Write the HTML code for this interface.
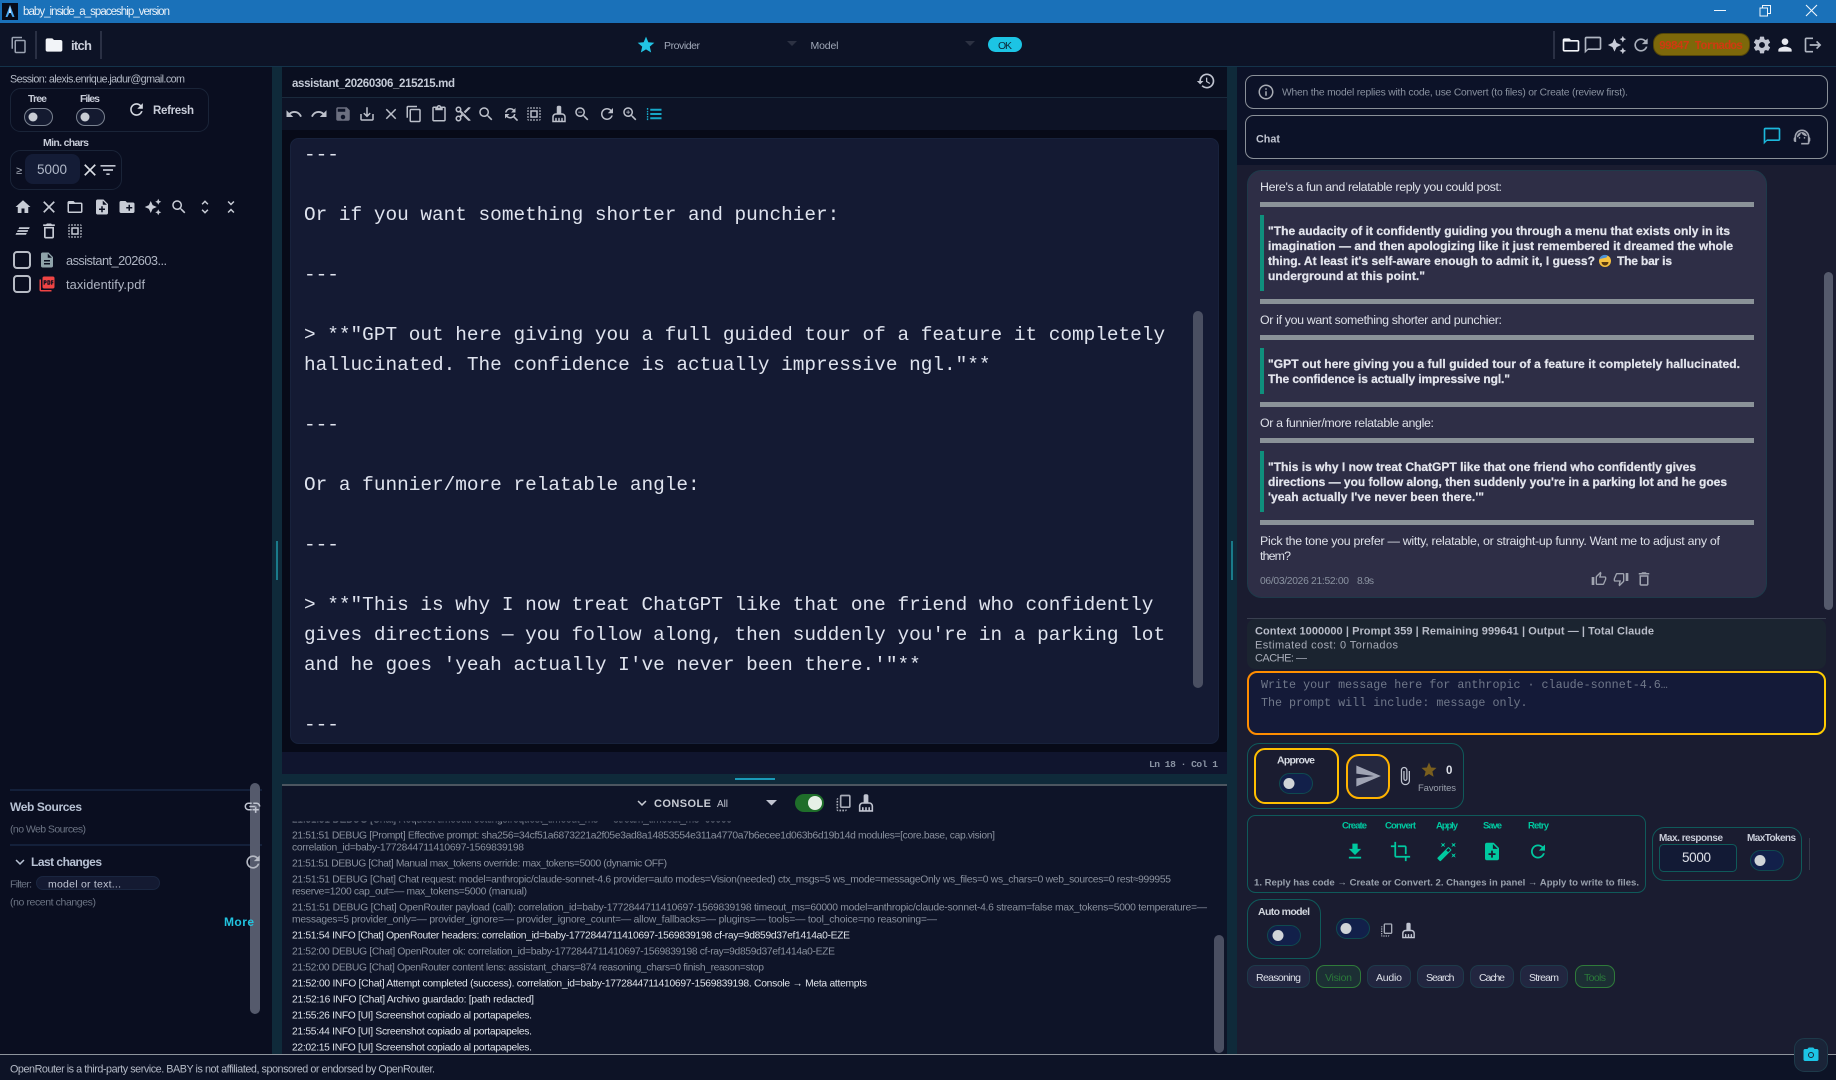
<!DOCTYPE html>
<html lang="en"><head><meta charset="utf-8"><title>baby_inside_a_spaceship_version</title>
<style>
html,body{margin:0;padding:0;background:#0a0e20;width:1836px;height:1080px;overflow:hidden}
svg{display:block}
text{font-family:"Liberation Sans","DejaVu Sans",sans-serif;white-space:pre}
.m{font-family:"Liberation Mono",monospace}
.b{font-weight:bold}
.log text{font-size:10.3px}
.d{fill:#8a919e}.i{fill:#dfe3ea}
.ed text{font-family:"Liberation Mono",monospace;font-size:19.4px;fill:#dfe3ee}
.bq text{font-weight:bold;font-size:12px;fill:#e2e4ec;stroke:#e2e4ec;stroke-width:.25px}
.p{font-size:12.4px;fill:#dde0e8}
.chip{fill:#222640;stroke:#1e3a4a}
.chipg{fill:#1c2f34;stroke:#2f7a3a}
.teal{fill:none;stroke:#0f5a5a}
</style></head><body>
<svg xmlns="http://www.w3.org/2000/svg" width="1836" height="1080" viewBox="0 0 1836 1080">
<defs>
<linearGradient id="og" x1="0" x2="1" y1="0" y2="0"><stop offset="0" stop-color="#ff8c00"/><stop offset=".45" stop-color="#ffa000"/><stop offset="1" stop-color="#ffcc00"/></linearGradient>
<clipPath id="logclip"><rect x="282" y="822" width="930" height="232"/></clipPath>
<symbol id="home" viewBox="0 0 24 24"><path d="M10 20v-6h4v6h5v-8h3L12 3 2 12h3v8z"/></symbol>
<symbol id="close" viewBox="0 0 24 24"><path d="M19 6.41L17.59 5 12 10.59 6.41 5 5 6.41 10.59 12 5 17.59 6.41 19 12 13.41 17.59 19 19 17.59 13.41 12z"/></symbol>
<symbol id="folderO" viewBox="0 0 24 24"><path d="M20 6h-8l-2-2H4c-1.1 0-2 .9-2 2v12c0 1.1.9 2 2 2h16c1.1 0 2-.9 2-2V8c0-1.1-.9-2-2-2zm0 12H4V8h16v10z"/></symbol>
<symbol id="folder" viewBox="0 0 24 24"><path d="M10 4H4c-1.1 0-2 .9-2 2v12c0 1.1.9 2 2 2h16c1.1 0 2-.9 2-2V8c0-1.1-.9-2-2-2h-8l-2-2z"/></symbol>
<symbol id="noteadd" viewBox="0 0 24 24"><path d="M14 2H6c-1.1 0-1.99.9-1.99 2L4 20c0 1.1.89 2 1.99 2H18c1.1 0 2-.9 2-2V8l-6-6zm2 14h-3v3h-2v-3H8v-2h3v-3h2v3h3v2zm-3-7V3.5L18.5 9H13z"/></symbol>
<symbol id="newfolder" viewBox="0 0 24 24"><path d="M20 6h-8l-2-2H4c-1.11 0-1.99.89-1.99 2L2 18c0 1.11.89 2 2 2h16c1.11 0 2-.89 2-2V8c0-1.11-.89-2-2-2zm-1 8h-3v3h-2v-3h-3v-2h3V9h2v3h3v2z"/></symbol>
<symbol id="spark" viewBox="0 0 24 24"><path d="M19 9l1.25-2.75L23 5l-2.75-1.25L19 1l-1.25 2.75L15 5l2.75 1.25L19 9zm-7.5.5L9 4 6.5 9.5 1 12l5.5 2.5L9 20l2.5-5.5L17 12l-5.5-2.5zM19 15l-1.25 2.75L15 19l2.75 1.25L19 23l1.25-2.75L23 19l-2.75-1.25L19 15z"/></symbol>
<symbol id="search" viewBox="0 0 24 24"><path d="M15.5 14h-.79l-.28-.27C15.41 12.59 16 11.11 16 9.5 16 5.91 13.09 3 9.5 3S3 5.91 3 9.5 5.91 16 9.5 16c1.61 0 3.09-.59 4.23-1.57l.27.28v.79l5 4.99L20.49 19l-4.99-5zm-6 0C7.01 14 5 11.99 5 9.5S7.01 5 9.5 5 14 7.01 14 9.5 11.99 14 9.5 14z"/></symbol>
<symbol id="zoomout" viewBox="0 0 24 24"><path d="M15.5 14h-.79l-.28-.27C15.41 12.59 16 11.11 16 9.5 16 5.91 13.09 3 9.5 3S3 5.91 3 9.5 5.91 16 9.5 16c1.61 0 3.09-.59 4.23-1.57l.27.28v.79l5 4.99L20.49 19l-4.99-5zm-6 0C7.01 14 5 11.99 5 9.5S7.01 5 9.5 5 14 7.01 14 9.5 11.99 14 9.5 14zM7 9h5v1H7z"/></symbol>
<symbol id="zoomin" viewBox="0 0 24 24"><path d="M15.5 14h-.79l-.28-.27C15.41 12.59 16 11.11 16 9.5 16 5.91 13.09 3 9.5 3S3 5.91 3 9.5 5.91 16 9.5 16c1.61 0 3.09-.59 4.23-1.57l.27.28v.79l5 4.99L20.49 19l-4.99-5zm-6 0C7.01 14 5 11.99 5 9.5S7.01 5 9.5 5 14 7.01 14 9.5 11.99 14 9.5 14zM12 10h-2v2H9v-2H7V9h2V7h1v2h2v1z"/></symbol>
<symbol id="more" viewBox="0 0 24 24"><path d="M12 5.83L15.17 9l1.41-1.41L12 3 7.41 7.59 8.83 9 12 5.83zm0 12.34L8.83 15l-1.41 1.41L12 21l4.59-4.59L15.17 15 12 18.17z"/></symbol>
<symbol id="less" viewBox="0 0 24 24"><path d="M7.41 18.59L8.83 20 12 16.83 15.17 20l1.41-1.41L12 14l-4.59 4.59zm9.18-13.18L15.17 4 12 7.17 8.83 4 7.41 5.41 12 10l4.59-4.59z"/></symbol>
<symbol id="lines" viewBox="0 0 24 24"><path d="M7 7h14l-1 2.4H6zM5 10.8h14l-1 2.4H4zM3 14.6h14l-1 2.4H2z"/></symbol>
<symbol id="trash" viewBox="0 0 24 24"><path d="M6 19c0 1.1.9 2 2 2h8c1.1 0 2-.9 2-2V7H6v12zM8 9h8v10H8V9zm7.5-5l-1-1h-5l-1 1H5v2h14V4z"/></symbol>
<symbol id="selall" viewBox="0 0 24 24"><path d="M3 5h2V3c-1.1 0-2 .9-2 2zm0 8h2v-2H3v2zm4 8h2v-2H7v2zM3 9h2V7H3v2zm10-6h-2v2h2V3zm6 0v2h2c0-1.1-.9-2-2-2zM5 21v-2H3c0 1.1.9 2 2 2zm-2-4h2v-2H3v2zM9 3H7v2h2V3zm2 18h2v-2h-2v2zm8-8h2v-2h-2v2zm0 8c1.1 0 2-.9 2-2h-2v2zm0-12h2V7h-2v2zm0 8h2v-2h-2v2zm-4 4h2v-2h-2v2zm0-16h2V3h-2v2zM7 17h10V7H7v10zm2-8h6v6H9V9z"/></symbol>
<symbol id="doc" viewBox="0 0 24 24"><path d="M14 2H6c-1.1 0-1.99.9-1.99 2L4 20c0 1.1.89 2 1.99 2H18c1.1 0 2-.9 2-2V8l-6-6zm2 16H8v-2h8v2zm0-4H8v-2h8v2zm-3-5V3.5L18.5 9H13z"/></symbol>
<symbol id="pdf" viewBox="0 0 24 24"><path d="M20 2H8c-1.1 0-2 .9-2 2v12c0 1.1.9 2 2 2h12c1.1 0 2-.9 2-2V4c0-1.1-.9-2-2-2zm-8.5 7.5c0 .83-.67 1.5-1.5 1.5H9v2H7.5V7H10c.83 0 1.5.67 1.5 1.5v1zm5 2c0 .83-.67 1.5-1.5 1.5h-2.5V7H15c.83 0 1.5.67 1.5 1.5v3zm4-3H19v1h1.5V11H19v2h-1.5V7h3v1.5zM9 9.5h1v-1H9v1zM4 6H2v14c0 1.1.9 2 2 2h14v-2H4V6zm10 5.5h1v-3h-1v3z"/></symbol>
<symbol id="refresh" viewBox="0 0 24 24"><path d="M17.65 6.35C16.2 4.9 14.21 4 12 4c-4.42 0-7.99 3.58-7.99 8s3.57 8 7.99 8c3.73 0 6.84-2.55 7.73-6h-2.08c-.82 2.33-3.04 4-5.65 4-3.31 0-6-2.69-6-6s2.69-6 6-6c1.66 0 3.14.69 4.22 1.78L13 11h7V4l-2.35 2.35z"/></symbol>
<symbol id="filter" viewBox="0 0 24 24"><path d="M10 18h4v-2h-4v2zM3 6v2h18V6H3zm3 7h12v-2H6v2z"/></symbol>
<symbol id="undo" viewBox="0 0 24 24"><path d="M12.5 8c-2.65 0-5.05.99-6.9 2.6L2 7v9h9l-3.62-3.62c1.39-1.16 3.16-1.88 5.12-1.88 3.54 0 6.55 2.31 7.6 5.5l2.37-.78C21.08 11.03 17.15 8 12.5 8z"/></symbol>
<symbol id="redo" viewBox="0 0 24 24"><path d="M18.4 10.6C16.55 8.99 14.15 8 11.5 8c-4.65 0-8.58 3.03-9.96 7.22L3.9 16c1.05-3.19 4.05-5.5 7.6-5.5 1.95 0 3.73.72 5.12 1.88L13 16h9V7l-3.6 3.6z"/></symbol>
<symbol id="save" viewBox="0 0 24 24"><path d="M17 3H5c-1.11 0-2 .9-2 2v14c0 1.1.89 2 2 2h14c1.1 0 2-.9 2-2V7l-4-4zm-5 16c-1.66 0-3-1.34-3-3s1.34-3 3-3 3 1.34 3 3-1.34 3-3 3zm3-10H5V5h10v4z"/></symbol>
<symbol id="savealt" viewBox="0 0 24 24"><path d="M19 12v7H5v-7H3v7c0 1.1.9 2 2 2h14c1.1 0 2-.9 2-2v-7h-2zm-6 .67l2.59-2.58L17 11.5l-5 5-5-5 1.41-1.41L11 12.67V3h2z"/></symbol>
<symbol id="copy" viewBox="0 0 24 24"><path d="M16 1H4c-1.1 0-2 .9-2 2v14h2V3h12V1zm3 4H8c-1.1 0-2 .9-2 2v14c0 1.1.9 2 2 2h11c1.1 0 2-.9 2-2V7c0-1.1-.9-2-2-2zm0 16H8V7h11v14z"/></symbol>
<symbol id="paste" viewBox="0 0 24 24"><path d="M19 2h-4.18C14.4.84 13.3 0 12 0c-1.3 0-2.4.84-2.82 2H5c-1.1 0-2 .9-2 2v16c0 1.1.9 2 2 2h14c1.1 0 2-.9 2-2V4c0-1.1-.9-2-2-2zm-7 0c.55 0 1 .45 1 1s-.45 1-1 1-1-.45-1-1 .45-1 1-1zm7 18H5V4h2v3h10V4h2v16z"/></symbol>
<symbol id="cut" viewBox="0 0 24 24"><path d="M9.64 7.64c.23-.5.36-1.05.36-1.64 0-2.21-1.79-4-4-4S2 3.79 2 6s1.79 4 4 4c.59 0 1.14-.13 1.64-.36L10 12l-2.36 2.36C7.14 14.13 6.59 14 6 14c-2.21 0-4 1.79-4 4s1.79 4 4 4 4-1.79 4-4c0-.59-.13-1.14-.36-1.64L12 14l7 7h3v-1L9.64 7.64zM6 8c-1.1 0-2-.89-2-2s.9-2 2-2 2 .89 2 2-.9 2-2 2zm0 12c-1.1 0-2-.89-2-2s.9-2 2-2 2 .89 2 2-.9 2-2 2zm6-7.5c-.28 0-.5-.22-.5-.5s.22-.5.5-.5.5.22.5.5-.22.5-.5.5zM19 3l-6 6 2 2 7-7V3z"/></symbol>
<symbol id="findrep" viewBox="0 0 24 24"><path d="M11 6c1.38 0 2.63.56 3.54 1.46L12 10h6V4l-2.05 2.05C14.68 4.78 12.93 4 11 4c-3.53 0-6.43 2.61-6.92 6H6.1c.46-2.28 2.48-4 4.9-4zm5.64 9.14c.66-.9 1.12-1.97 1.28-3.14H15.9c-.46 2.28-2.48 4-4.9 4-1.38 0-2.63-.56-3.54-1.46L10 12H4v6l2.05-2.05C7.32 17.22 9.07 18 11 18c1.55 0 2.98-.51 4.14-1.36L20 21.49 21.49 20l-4.85-4.86z"/></symbol>
<symbol id="brush" viewBox="0 0 24 24"><path d="M16 11h-1V3c0-1.1-.9-2-2-2h-2c-1.1 0-2 .9-2 2v8H8c-2.76 0-5 2.24-5 5v7h18v-7c0-2.76-2.24-5-5-5zm3 10h-2v-3c0-.55-.45-1-1-1s-1 .45-1 1v3h-2v-3c0-.55-.45-1-1-1s-1 .45-1 1v3H9v-3c0-.55-.45-1-1-1s-1 .45-1 1v3H5v-5c0-1.65 1.35-3 3-3h8c1.65 0 3 1.35 3 3v5z"/></symbol>
<symbol id="list" viewBox="0 0 24 24"><path d="M7 5h15v2.6H7zM7 10.7h15v2.6H7zM7 16.4h15v2.6H7zM2.5 4h1.8v2.4H2.5zM2.5 7.8h1.8v2H2.5zM2.5 11h1.8v2.4H2.5zM2.5 14.6h1.8v2H2.5zM2.5 17.8h1.8v2.4H2.5z"/></symbol>
<symbol id="history" viewBox="0 0 24 24"><path d="M13 3c-4.97 0-9 4.03-9 9H1l3.89 3.89.07.14L9 12H6c0-3.87 3.13-7 7-7s7 3.13 7 7-3.13 7-7 7c-1.93 0-3.68-.79-4.94-2.06l-1.42 1.42C8.27 19.99 10.51 21 13 21c4.97 0 9-4.03 9-9s-4.03-9-9-9zm-1 5v5l4.28 2.54.72-1.21-3.5-2.08V8H12z"/></symbol>
<symbol id="star" viewBox="0 0 24 24"><path d="M12 17.27L18.18 21l-1.64-7.03L22 9.24l-7.19-.61L12 2 9.19 8.63 2 9.24l5.46 4.73L5.82 21z"/></symbol>
<symbol id="chat" viewBox="0 0 24 24"><path d="M20 2H4c-1.1 0-2 .9-2 2v18l4-4h14c1.1 0 2-.9 2-2V4c0-1.1-.9-2-2-2zm0 14H6l-2 2V4h16v12z"/></symbol>
<symbol id="gear" viewBox="0 0 24 24"><path d="M19.43 12.98c.04-.32.07-.64.07-.98s-.03-.66-.07-.98l2.11-1.65c.19-.15.24-.42.12-.64l-2-3.46c-.12-.22-.39-.3-.61-.22l-2.49 1c-.52-.4-1.08-.73-1.69-.98l-.38-2.65C14.46 2.18 14.25 2 14 2h-4c-.25 0-.46.18-.49.42l-.38 2.65c-.61.25-1.17.59-1.69.98l-2.49-1c-.23-.09-.49 0-.61.22l-2 3.46c-.13.22-.07.49.12.64l2.11 1.65c-.04.32-.07.65-.07.98s.03.66.07.98l-2.11 1.65c-.19.15-.24.42-.12.64l2 3.46c.12.22.39.3.61.22l2.49-1c.52.4 1.08.73 1.69.98l.38 2.65c.03.24.24.42.49.42h4c.25 0 .46-.18.49-.42l.38-2.65c.61-.25 1.17-.59 1.69-.98l2.49 1c.23.09.49 0 .61-.22l2-3.46c.12-.22.07-.49-.12-.64l-2.11-1.65zM12 15.5c-1.93 0-3.5-1.57-3.5-3.5s1.57-3.5 3.5-3.5 3.5 1.57 3.5 3.5-1.57 3.5-3.5 3.5z"/></symbol>
<symbol id="person" viewBox="0 0 24 24"><path d="M12 12c2.21 0 4-1.79 4-4s-1.79-4-4-4-4 1.79-4 4 1.79 4 4 4zm0 2c-2.67 0-8 1.34-8 4v2h16v-2c0-2.66-5.33-4-8-4z"/></symbol>
<symbol id="logout" viewBox="0 0 24 24"><path d="M17 7l-1.41 1.41L18.17 11H8v2h10.17l-2.58 2.58L17 17l5-5zM4 5h8V3H4c-1.1 0-2 .9-2 2v14c0 1.1.9 2 2 2h8v-2H4V5z"/></symbol>
<symbol id="info" viewBox="0 0 24 24"><path d="M11 7h2v2h-2zm0 4h2v6h-2zm1-9C6.48 2 2 6.48 2 12s4.48 10 10 10 10-4.48 10-10S17.52 2 12 2zm0 18c-4.41 0-8-3.59-8-8s3.59-8 8-8 8 3.59 8 8-3.59 8-8 8z"/></symbol>
<symbol id="agent" viewBox="0 0 24 24"><path d="M21 12.22C21 6.73 16.74 3 12 3c-4.69 0-9 3.65-9 9.28-.6.34-1 .98-1 1.72v2c0 1.1.9 2 2 2h1v-6.1c0-3.87 3.13-7 7-7s7 3.13 7 7V19h-8v2h8c1.1 0 2-.9 2-2v-1.22c.59-.31 1-.92 1-1.62v-2.3c0-.7-.41-1.31-1-1.64z"/><circle cx="9" cy="13" r="1"/><circle cx="15" cy="13" r="1"/><path d="M18 11.03C17.52 8.18 15.04 6 12.05 6c-3.03 0-6.29 2.51-6.03 6.45 2.47-1.01 4.33-3.21 4.86-5.89 1.31 2.63 4 4.44 7.12 4.47z"/></symbol>
<symbol id="tup" viewBox="0 0 24 24"><path d="M9 21h9c.83 0 1.54-.5 1.84-1.22l3.02-7.05c.09-.23.14-.47.14-.73v-2c0-1.1-.9-2-2-2h-6.31l.95-4.57.03-.32c0-.41-.17-.79-.44-1.06L14.17 1 7.58 7.59C7.22 7.95 7 8.45 7 9v10c0 1.1.9 2 2 2zM9 9l4.34-4.34L12 10h9v2l-3 7H9V9zM1 9h4v12H1z"/></symbol>
<symbol id="tdown" viewBox="0 0 24 24"><path d="M15 3H6c-.83 0-1.54.5-1.84 1.22l-3.02 7.05c-.09.23-.14.47-.14.73v2c0 1.1.9 2 2 2h6.31l-.95 4.57-.03.32c0 .41.17.79.44 1.06L9.83 23l6.59-6.59c.36-.36.58-.86.58-1.41V5c0-1.1-.9-2-2-2zm0 12l-4.34 4.34L12 14H3v-2l3-7h9v10zm4-12h4v12h-4z"/></symbol>
<symbol id="send" viewBox="0 0 24 24"><path d="M2.01 21L23 12 2.01 3 2 10l15 2-15 2z"/></symbol>
<symbol id="clip" viewBox="0 0 24 24"><path d="M16.5 6v11.5c0 2.21-1.79 4-4 4s-4-1.79-4-4V5c0-1.38 1.12-2.5 2.5-2.5s2.5 1.12 2.5 2.5v10.5c0 .55-.45 1-1 1s-1-.45-1-1V6H10v9.5c0 1.38 1.12 2.5 2.5 2.5s2.5-1.12 2.5-2.5V5c0-2.21-1.79-4-4-4S7 2.79 7 5v12.5c0 3.04 2.46 5.5 5.5 5.5s5.5-2.46 5.5-5.5V6h-1.5z"/></symbol>
<symbol id="dl" viewBox="0 0 24 24"><path d="M19 9h-4V3H9v6H5l7 7 7-7zM5 18v2h14v-2H5z"/></symbol>
<symbol id="crop" viewBox="0 0 24 24"><path d="M17 15h2V7c0-1.1-.9-2-2-2H9v2h8v8zM7 17V1H5v4H1v2h4v10c0 1.1.9 2 2 2h10v4h2v-4h4v-2H7z"/></symbol>
<symbol id="wand" viewBox="0 0 24 24"><path d="M7.5 5.6L10 7 8.6 4.5 10 2 7.5 3.4 5 2l1.4 2.5L5 7zm12 9.8L17 14l1.4 2.5L17 19l2.5-1.4L22 19l-1.4-2.5L22 14zM22 2l-2.5 1.4L17 2l1.4 2.5L17 7l2.5-1.4L22 7l-1.4-2.5zm-7.63 5.29c-.39-.39-1.02-.39-1.41 0L1.29 18.96c-.39.39-.39 1.02 0 1.41l2.34 2.34c.39.39 1.02.39 1.41 0L16.7 11.05c.39-.39.39-1.02 0-1.41l-2.33-2.35zm-1.03 5.49l-2.12-2.12 2.44-2.44 2.12 2.12-2.44 2.44z"/></symbol>
<symbol id="addlink" viewBox="0 0 24 24"><path d="M8 11h8v2H8zm12.1 1H22c0-2.76-2.24-5-5-5h-4v1.9h4c1.71 0 3.1 1.39 3.1 3.1zM3.9 12c0-1.71 1.39-3.1 3.1-3.1h4V7H7c-2.76 0-5 2.24-5 5s2.24 5 5 5h4v-1.9H7c-1.71 0-3.1-1.39-3.1-3.1zM17 12h-2v3h-3v2h3v3h2v-3h3v-2h-3z"/></symbol>
<symbol id="chev" viewBox="0 0 24 24"><path d="M16.59 8.59L12 13.17 7.41 8.59 6 10l6 6 6-6z"/></symbol>
<symbol id="cam" viewBox="0 0 24 24"><path fill-rule="evenodd" d="M9 2L7.17 4H4c-1.1 0-2 .9-2 2v12c0 1.1.9 2 2 2h16c1.1 0 2-.9 2-2V6c0-1.1-.9-2-2-2h-3.17L15 2H9zm3 6a4 4 0 1 1 0 8 4 4 0 0 1 0-8zm0 1.3a2.7 2.7 0 1 0 0 5.4 2.7 2.7 0 0 0 0-5.4z"/></symbol>
<symbol id="copyall" viewBox="0 0 24 24"><path d="M18 2H9c-1.1 0-2 .9-2 2v12c0 1.1.9 2 2 2h9c1.1 0 2-.9 2-2V4c0-1.1-.9-2-2-2zm0 14H9V4h9v12zM3 15v-2h2v2H3zm0-5.5h2v2H3v-2zM10 20h2v2h-2v-2zm-7-1.5v-2h2v2H3zM5 22c-1.1 0-2-.9-2-2h2v2zm3.5 0h-2v-2h2v2zm5 0v-2h2c0 1.1-.9 2-2 2zM5 6v2H3c0-1.1.9-2 2-2z"/></symbol>
</defs>

<!-- backgrounds -->
<rect width="1836" height="1080" fill="#0a0e20"/>
<rect y="0" width="1836" height="23" fill="#1a71b9"/>
<rect y="23" width="1836" height="43" fill="#0d1326"/>
<rect y="66" width="1836" height="1" fill="#14334a"/>

<!-- title bar -->
<rect x="2" y="3" width="16" height="17" fill="#070b18"/>
<path d="M10 5l4.5 12h-2L10 11.5 7.5 17h-2z" fill="#4aa8f0"/><path d="M10 5l1.2 8H8.8z" fill="#d0e8ff"/>
<text x="23" y="15" font-size="11.5" fill="#e8f0f8" textLength="147">baby_inside_a_spaceship_version</text>
<rect x="1714" y="10" width="12" height="1" fill="#f0f6fc"/>
<rect x="1762.5" y="5.5" width="8" height="8" fill="none" stroke="#f0f6fc"/><rect x="1760" y="8" width="7.5" height="8" fill="#1a71b9" stroke="#f0f6fc"/>
<path d="M1806 5l11 11M1817 5l-11 11" stroke="#f0f6fc" stroke-width="1.1"/>

<!-- top bar -->
<use href="#copy" x="10" y="36" width="18" height="18" fill="#9ca3b2"/>
<rect x="35" y="31" width="2" height="28" fill="#2a3044"/>
<use href="#folder" x="44" y="35" width="20" height="20" fill="#f2f4f8"/>
<text class="b" x="71" y="50" font-size="13" fill="#c8ccd8" textLength="21">itch</text>
<rect x="100" y="31" width="2" height="28" fill="#2a3044"/>
<use href="#star" x="636" y="35" width="20" height="20" fill="#22c4e4"/>
<text x="664" y="49" font-size="10.5" fill="#a0a8b8" textLength="36">Provider</text>
<path d="M787 41h10l-5 5z" fill="#2c3142"/>
<text x="810.5" y="49" font-size="10.5" fill="#a0a8b8" textLength="28">Model</text>
<path d="M965 41h10l-5 5z" fill="#2c3142"/>
<rect x="988" y="37" width="34" height="15" rx="7.5" fill="#1cc4e4"/>
<text x="998" y="49" font-size="10.5" fill="#0d2a3a" textLength="14">OK</text>
<rect x="1553" y="31" width="2" height="28" fill="#2a3044"/>
<use href="#folderO" x="1561" y="35" width="20" height="20" fill="#f2f4f8"/>
<use href="#chat" x="1583" y="35" width="20" height="20" fill="#b0b6c2"/>
<use href="#spark" x="1607" y="35" width="20" height="20" fill="#c8ccd8"/>
<use href="#refresh" x="1631" y="35" width="20" height="20" fill="#aab0bc"/>
<rect x="1653" y="33" width="97" height="23" rx="10" fill="#544608"/>
<rect x="1654" y="34" width="95" height="21" rx="9" fill="#7d680a"/>
<text class="m b" x="1659" y="49" font-size="11.5" fill="#cf3a10" textLength="84">99847 Tornados</text>
<use href="#gear" x="1752" y="35" width="20" height="20" fill="#c0c4d0"/>
<use href="#person" x="1775" y="35" width="20" height="20" fill="#e6e8ee"/>
<use href="#logout" x="1803" y="35" width="20" height="20" fill="#b0b6c2"/>

<!-- left sidebar -->
<text x="10" y="82.5" font-size="10.8" fill="#b4bac6" textLength="175">Session: alexis.enrique.jadur@gmail.com</text>
<rect x="10.5" y="88.5" width="198" height="43" rx="10" fill="none" stroke="#1a2438"/>
<text class="b" x="28" y="102" font-size="10.5" fill="#c8ccd8" textLength="19">Tree</text>
<text class="b" x="80" y="102" font-size="10.5" fill="#c8ccd8" textLength="20">Files</text>
<rect x="24.5" y="108.5" width="28" height="17" rx="8.5" fill="#141a30" stroke="#7a8290"/><circle cx="33" cy="117" r="4.5" fill="#c8ccd4"/>
<rect x="76.5" y="108.5" width="28" height="17" rx="8.5" fill="#141a30" stroke="#7a8290"/><circle cx="85" cy="117" r="4.5" fill="#c8ccd4"/>
<use href="#refresh" x="127" y="100" width="19" height="19" fill="#d4d8e0"/>
<text class="b" x="153" y="114" font-size="11.5" fill="#c8ccd8" textLength="41">Refresh</text>
<text class="b" x="43" y="146" font-size="10.5" fill="#c8ccd8" textLength="46">Min. chars</text>
<rect x="10.5" y="150.5" width="111" height="39" rx="10" fill="none" stroke="#1a2438"/>
<text x="16" y="174" font-size="11" fill="#aab0bc">≥</text>
<rect x="25" y="154" width="55" height="30" rx="8" fill="#141c36"/>
<text x="37" y="174" font-size="13.5" fill="#b0b8c8" textLength="30">5000</text>
<use href="#close" x="80" y="160" width="20" height="20" fill="#dde0e6"/>
<use href="#filter" x="98" y="160" width="20" height="20" fill="#c0c4d0"/>

<g fill="#c8ccd6">
<use href="#home" x="14" y="198" width="18" height="18"/><use href="#close" x="39" y="197" width="20" height="20"/><use href="#folderO" x="66" y="198" width="18" height="18"/><use href="#noteadd" x="93" y="198" width="18" height="18"/><use href="#newfolder" x="118" y="198" width="18" height="18"/><use href="#spark" x="144" y="198" width="18" height="18"/><use href="#search" x="170" y="198" width="18" height="18"/><use href="#more" x="196" y="198" width="18" height="18"/><use href="#less" x="222" y="198" width="18" height="18"/>
<use href="#lines" x="14" y="222" width="18" height="18"/><use href="#trash" x="39" y="221" width="20" height="20"/><use href="#selall" x="66" y="222" width="18" height="18"/>
</g>
<rect x="14" y="252" width="16" height="16" rx="3" fill="none" stroke="#b8bcc6" stroke-width="2"/>
<rect x="14" y="276" width="16" height="16" rx="3" fill="none" stroke="#b8bcc6" stroke-width="2"/>
<use href="#doc" x="38" y="251" width="18" height="18" fill="#8fa3aa"/>
<use href="#pdf" x="38" y="275" width="18" height="18" fill="#ef4444"/>
<text x="66" y="265" font-size="12.8" fill="#aeb4c2" textLength="101">assistant_202603...</text>
<text x="66" y="289" font-size="12.8" fill="#aeb4c2" textLength="79">taxidentify.pdf</text>

<rect x="10" y="789" width="252" height="2" fill="#14203a"/>
<text class="b" x="10" y="811" font-size="12" fill="#b8c2d4" textLength="72">Web Sources</text>
<text x="10" y="832.500" font-size="10.5" fill="#6c7484" textLength="76">(no Web Sources)</text>
<rect x="10" y="844" width="252" height="2" fill="#14203a"/>
<use href="#chev" x="11" y="853" width="18" height="18" fill="#b8c2d4"/>
<text class="b" x="31" y="866" font-size="12" fill="#b8c2d4" textLength="71">Last changes</text>
<text x="10" y="887.500" font-size="10.5" fill="#6c7484" textLength="22">Filter:</text>
<rect x="36.500" y="876.500" width="123" height="13" rx="6.5" fill="#141a32" stroke="#1a2640"/>
<text x="48" y="887.500" font-size="10.5" fill="#c0c6d4" textLength="73">model or text...</text>
<text x="10" y="905.500" font-size="10.5" fill="#6c7484" textLength="86">(no recent changes)</text>
<rect x="250" y="783" width="10" height="231" rx="5" fill="#555a6c"/>
<text class="b" x="224" y="926" font-size="12" fill="#22c4e0" textLength="30">More</text>
<use href="#addlink" x="243" y="797" width="19" height="19" fill="#c0c4d0"/>
<use href="#refresh" x="243" y="852" width="20" height="20" fill="#b4b8c2"/>

<!-- splitters -->
<rect x="272" y="67" width="10" height="987" fill="#0f2a3a"/>
<rect x="276" y="541" width="2" height="39" fill="#1a7a8a"/>
<rect x="1227" y="67" width="10" height="987" fill="#0f2a3a"/>
<rect x="1231" y="541" width="2" height="39" fill="#1a7a8a"/>

<!-- editor -->
<rect x="282" y="67" width="945" height="30" fill="#0a0f20"/>
<rect x="282" y="97" width="945" height="1" fill="#1a2a3c"/>
<text class="b" x="292" y="87" font-size="11.5" fill="#c4cad6" textLength="163">assistant_20260306_215215.md</text>
<use href="#history" x="1196" y="71" width="20" height="20" fill="#c0c4d0"/>
<rect x="282" y="98" width="945" height="32" fill="#0d1326"/>
<g fill="#bcc0ca">
<use href="#undo" x="285" y="105" width="18" height="18"/><use href="#redo" x="310" y="105" width="18" height="18"/><use href="#save" x="334" y="105" width="18" height="18" fill="#6c7080"/><use href="#savealt" x="358" y="105" width="18" height="18"/><use href="#close" x="382" y="105" width="18" height="18"/><use href="#copy" x="405" y="105" width="18" height="18"/><use href="#paste" x="430" y="105" width="18" height="18"/><use href="#cut" x="454" y="105" width="18" height="18"/><use href="#search" x="477" y="105" width="18" height="18"/><use href="#findrep" x="502" y="105" width="18" height="18"/><use href="#selall" x="525" y="105" width="18" height="18"/><use href="#brush" x="550" y="105" width="18" height="18"/><use href="#zoomout" x="573" y="105" width="18" height="18"/><use href="#refresh" x="598" y="105" width="18" height="18"/><use href="#zoomin" x="621" y="105" width="18" height="18"/>
</g>
<use href="#list" x="645" y="105" width="18" height="18" fill="#17a8c8"/>
<rect x="282" y="130" width="945" height="644" fill="#070a18"/>
<rect x="290.500" y="138.500" width="928" height="605" rx="8" fill="#141a33" stroke="#18223c"/>
<g class="ed">
<text x="304" y="160">---</text>
<text x="304" y="220">Or if you want something shorter and punchier:</text>
<text x="304" y="280">---</text>
<text x="304" y="340">&gt; **"GPT out here giving you a full guided tour of a feature it completely</text>
<text x="304" y="370">hallucinated. The confidence is actually impressive ngl."**</text>
<text x="304" y="430">---</text>
<text x="304" y="490">Or a funnier/more relatable angle:</text>
<text x="304" y="550">---</text>
<text x="304" y="610">&gt; **"This is why I now treat ChatGPT like that one friend who confidently</text>
<text x="304" y="640">gives directions — you follow along, then suddenly you're in a parking lot</text>
<text x="304" y="670">and he goes 'yeah actually I've never been there.'"**</text>
<text x="304" y="730">---</text>
</g>
<rect x="1193" y="311" width="10" height="377" rx="5" fill="#4a4f62"/>
<rect x="282" y="752" width="945" height="22" fill="#10152e"/>
<text class="m b" x="1149" y="767" font-size="9.6" fill="#8a93a3" textLength="69">Ln 18 · Col 1</text>
<rect x="282" y="774" width="945" height="10" fill="#0f2a3a"/>
<rect x="735" y="778" width="40" height="2" fill="#1a9ab8"/>
<rect x="282" y="784" width="945" height="2" fill="#4c5660"/>

<!-- console -->
<rect x="282" y="786" width="945" height="268" fill="#0e1428"/>
<use href="#chev" x="633" y="794" width="18" height="18" fill="#c8ccd4"/>
<text class="b" x="654" y="807" font-size="11" fill="#c8ccd4" textLength="57">CONSOLE</text>
<text x="717" y="807" font-size="10" fill="#c0c4d0" textLength="11">All</text>
<path d="M766 800h11l-5.500 5.500z" fill="#c0c4d0"/>
<rect x="795" y="794" width="29" height="18" rx="9" fill="#1f6e2a"/><circle cx="815" cy="803" r="7" fill="#e6f0e6"/>
<use href="#copyall" x="834" y="793" width="20" height="20" fill="#a8acb8"/>
<use href="#brush" x="856.500" y="793.500" width="19" height="19" fill="#c0c4d0"/>
<g class="log" transform="translate(0,-0.5)">
<g clip-path="url(#logclip)"><text class="d" x="292" y="823" textLength="440">21:51:51 DEBUG [Chat] Request timeout: settings.request_timeout_ms      stream_timeout_ms=60000</text></g>
<text class="d" x="292" y="839" textLength="703">21:51:51 DEBUG [Prompt] Effective prompt: sha256=34cf51a6873221a2f05e3ad8a14853554e311a4770a7b6ecee1d063b6d19b14d modules=[core.base, cap.vision]</text>
<text class="d" x="292" y="851" textLength="232">correlation_id=baby-1772844711410697-1569839198</text>
<text class="d" x="292" y="867" textLength="375">21:51:51 DEBUG [Chat] Manual max_tokens override: max_tokens=5000 (dynamic OFF)</text>
<text class="d" x="292" y="883" textLength="879">21:51:51 DEBUG [Chat] Chat request: model=anthropic/claude-sonnet-4.6 provider=auto modes=Vision(needed) ctx_msgs=5 ws_mode=messageOnly ws_files=0 ws_chars=0 web_sources=0 rest≈999955</text>
<text class="d" x="292" y="895" textLength="235">reserve=1200 cap_out=— max_tokens=5000 (manual)</text>
<text class="d" x="292" y="911" textLength="915">21:51:51 DEBUG [Chat] OpenRouter payload (call): correlation_id=baby-1772844711410697-1569839198 timeout_ms=60000 model=anthropic/claude-sonnet-4.6 stream=false max_tokens=5000 temperature=—</text>
<text class="d" x="292" y="923" textLength="645">messages=5 provider_only=— provider_ignore=— provider_ignore_count=— allow_fallbacks=— plugins=— tools=— tool_choice=no reasoning=—</text>
<text class="i" x="292" y="939" textLength="558">21:51:54 INFO [Chat] OpenRouter headers: correlation_id=baby-1772844711410697-1569839198 cf-ray=9d859d37ef1414a0-EZE</text>
<text class="d" x="292" y="955" textLength="543">21:52:00 DEBUG [Chat] OpenRouter ok: correlation_id=baby-1772844711410697-1569839198 cf-ray=9d859d37ef1414a0-EZE</text>
<text class="d" x="292" y="971" textLength="472">21:52:00 DEBUG [Chat] OpenRouter content lens: assistant_chars=874 reasoning_chars=0 finish_reason=stop</text>
<text class="i" x="292" y="987" textLength="575">21:52:00 INFO [Chat] Attempt completed (success). correlation_id=baby-1772844711410697-1569839198. Console → Meta attempts</text>
<text class="i" x="292" y="1003" textLength="242">21:52:16 INFO [Chat] Archivo guardado: [path redacted]</text>
<text class="i" x="292" y="1019" textLength="240">21:55:26 INFO [UI] Screenshot copiado al portapapeles.</text>
<text class="i" x="292" y="1035" textLength="240">21:55:44 INFO [UI] Screenshot copiado al portapapeles.</text>
<text class="i" x="292" y="1051" textLength="240">22:02:15 INFO [UI] Screenshot copiado al portapapeles.</text>
</g>
<rect x="1214" y="935" width="10" height="118" rx="5" fill="#4a4f62"/>

<!-- right panel -->
<rect x="1237" y="67" width="599" height="98" fill="#0c1228"/>
<rect x="1237" y="165" width="599" height="889" fill="#1a1c30"/>
<rect x="1245.500" y="75.500" width="582" height="33" rx="8" fill="none" stroke="#8a9098"/>
<use href="#info" x="1257" y="83" width="18" height="18" fill="#a8acb4"/>
<text x="1282" y="95.500" font-size="10.3" fill="#8a92a0" textLength="346">When the model replies with code, use Convert (to files) or Create (review first).</text>
<rect x="1245.500" y="115.500" width="582" height="43" rx="8" fill="none" stroke="#8a9098"/>
<text class="b" x="1256" y="142.500" font-size="10.8" fill="#c0c4d0" textLength="24">Chat</text>
<use href="#chat" x="1762" y="126" width="20" height="20" fill="#1cb8dc"/>
<use href="#agent" x="1792" y="127" width="20" height="20" fill="#a0a4b0"/>

<!-- message bubble -->
<rect x="1247.500" y="170.500" width="519" height="427" rx="14" fill="#2e2e46" stroke="#1e3a4a"/>
<text class="p" x="1260" y="191" textLength="242">Here's a fun and relatable reply you could post:</text>
<g fill="#8a9298">
<rect x="1260" y="202" width="494" height="5"/><rect x="1260" y="299" width="494" height="5"/><rect x="1260" y="335" width="494" height="5"/><rect x="1260" y="402" width="494" height="5"/><rect x="1260" y="438" width="494" height="5"/><rect x="1260" y="520" width="494" height="5"/>
</g>
<g fill="#0f8f7c"><rect x="1260" y="215" width="4" height="76"/><rect x="1260" y="348" width="4" height="46"/><rect x="1260" y="451" width="4" height="61"/></g>
<g class="bq">
<text x="1268" y="235" textLength="462">"The audacity of it confidently guiding you through a menu that exists only in its</text>
<text x="1268" y="250" textLength="465">imagination — and then apologizing like it just remembered it dreamed the whole</text>
<text x="1268" y="265" textLength="327">thing. At least it's self-aware enough to admit it, I guess?</text>
<text x="1617" y="265" textLength="55">The bar is</text>
<text x="1268" y="280" textLength="157">underground at this point."</text>
<text x="1268" y="368" textLength="472">"GPT out here giving you a full guided tour of a feature it completely hallucinated.</text>
<text x="1268" y="383" textLength="242">The confidence is actually impressive ngl."</text>
<text x="1268" y="471" textLength="428">"This is why I now treat ChatGPT like that one friend who confidently gives</text>
<text x="1268" y="486" textLength="459">directions — you follow along, then suddenly you're in a parking lot and he goes</text>
<text x="1268" y="501" textLength="216">'yeah actually I've never been there.'"</text>
</g>
<circle cx="1605" cy="261" r="6" fill="#f5c040"/><path d="M1599.500 259a5.500 5 0 0 1 8-3.500l-1 2z" fill="#4a90d8"/><path d="M1601.500 262h7a3.500 3.500 0 0 1-7 0z" fill="#5a3a10"/>
<text class="p" x="1260" y="324" textLength="242">Or if you want something shorter and punchier:</text>
<text class="p" x="1260" y="427" textLength="174">Or a funnier/more relatable angle:</text>
<text class="p" x="1260" y="545" textLength="460">Pick the tone you prefer — witty, relatable, or straight-up funny. Want me to adjust any of</text>
<text class="p" x="1260" y="560" textLength="31">them?</text>
<text x="1260" y="584" font-size="10.3" fill="#8a92a0" textLength="89">06/03/2026 21:52:00</text>
<text x="1357" y="584" font-size="10.3" fill="#8a92a0" textLength="17">8.9s</text>
<use href="#tup" x="1591" y="571" width="16" height="16" fill="#a0a4b0"/>
<use href="#tdown" x="1613" y="571" width="16" height="16" fill="#a0a4b0"/>
<use href="#trash" x="1635" y="570" width="18" height="18" fill="#a0a4b0"/>
<rect x="1824" y="272" width="9" height="338" rx="4.500" fill="#555a6c"/>

<!-- context info -->
<rect x="1247" y="618" width="579" height="1" fill="#3a4050"/>
<rect x="1247" y="619" width="579" height="50" rx="8" fill="#1b2430"/>
<text class="b" x="1255" y="634.500" font-size="11" fill="#b8bcc8" textLength="399">Context 1000000 | Prompt 359 | Remaining 999641 | Output — | Total Claude</text>
<text x="1255" y="648.500" font-size="11" fill="#a8acb8" textLength="143">Estimated cost: 0 Tornados</text>
<text x="1255" y="661.500" font-size="11" fill="#a8acb8" textLength="52">CACHE: —</text>

<!-- textarea -->
<rect x="1248" y="672" width="577" height="62" rx="9" fill="#141a38" stroke="url(#og)" stroke-width="2"/>
<text class="m" x="1261" y="688" font-size="11.7" fill="#70788a">Write your message here for anthropic · claude-sonnet-4.6…</text>
<text class="m" x="1261" y="706" font-size="11.7" fill="#70788a">The prompt will include: message only.</text>

<!-- approve row -->
<rect class="teal" x="1247.500" y="743.500" width="216" height="65" rx="12"/>
<rect x="1255" y="749" width="83" height="54" rx="10" fill="none" stroke="#ffbf00" stroke-width="2"/>
<text class="b" x="1277" y="763.500" font-size="10.5" fill="#d8dce4" textLength="38">Approve</text>
<rect x="1279.500" y="773.500" width="33" height="20" rx="10" fill="#12204a" stroke="#0f4a50"/><circle cx="1289" cy="783.500" r="5.500" fill="#d0d4d8"/>
<rect x="1347" y="755" width="42" height="43" rx="12" fill="#25283f" stroke="#ffb300" stroke-width="2"/>
<use href="#send" x="1354" y="762" width="28" height="28" fill="#a0a4b4"/>
<use href="#clip" x="1395" y="766" width="20" height="20" fill="#c0c4d0"/>
<use href="#star" x="1420" y="761" width="18" height="18" fill="#7a5f1e"/>
<text class="b" x="1446" y="774" font-size="11.5" fill="#dde0e8">0</text>
<text x="1418" y="791" font-size="9.5" fill="#9aa0ac" textLength="38">Favorites</text>

<!-- actions -->
<rect class="teal" x="1247.500" y="815.500" width="398" height="77" rx="8"/>
<g class="b" font-size="9.5" fill="#00c8a0" font-weight="bold">
<text x="1342" y="828.500" textLength="25">Create</text><text x="1385" y="828.500" textLength="31">Convert</text><text x="1436" y="828.500" textLength="22">Apply</text><text x="1483" y="828.500" textLength="19">Save</text><text x="1528" y="828.500" textLength="21">Retry</text>
</g>
<g fill="#00c8a0">
<use href="#dl" x="1344.500" y="841" width="21" height="21"/><use href="#crop" x="1390" y="841" width="21" height="21"/><use href="#wand" x="1436.500" y="841" width="21" height="21"/><use href="#noteadd" x="1481.500" y="841" width="21" height="21"/><use href="#refresh" x="1527.500" y="841" width="21" height="21"/>
</g>
<text class="b" x="1254" y="885.500" font-size="9.6" fill="#98a0ac" textLength="385">1. Reply has code → Create or Convert. 2. Changes in panel → Apply to write to files.</text>

<!-- max response -->
<rect class="teal" x="1652.500" y="827.500" width="149" height="53" rx="12"/>
<text class="b" x="1659" y="841" font-size="10" fill="#c8ccd8" textLength="64">Max. response</text>
<text class="b" x="1747" y="841" font-size="10" fill="#c8ccd8" textLength="49">MaxTokens</text>
<rect x="1659.500" y="844.500" width="77" height="27" rx="4" fill="#121a35" stroke="#0f5a5a"/>
<text x="1682" y="862" font-size="13.5" fill="#dde0e8" textLength="29">5000</text>
<rect x="1750.500" y="850.500" width="33" height="20" rx="10" fill="#12204a" stroke="#0f4a50"/><circle cx="1760" cy="860.500" r="5.500" fill="#d0d4d8"/>
<rect x="1809" y="838" width="1" height="32" fill="#333848"/>

<!-- auto model -->
<rect class="teal" x="1247.500" y="899.500" width="73" height="59" rx="14"/>
<text class="b" x="1258" y="915" font-size="10.5" fill="#d0d4dc" textLength="52">Auto model</text>
<rect x="1267.500" y="925.500" width="33" height="20" rx="10" fill="#12204a" stroke="#0f4a50"/><circle cx="1278" cy="935.500" r="5.500" fill="#d0d4d8"/>
<rect x="1336.500" y="918.500" width="33" height="20" rx="10" fill="#12204a" stroke="#0f4a50"/><circle cx="1346" cy="928.500" r="5.500" fill="#d0d4d8"/>
<use href="#copyall" x="1379" y="922" width="16" height="16" fill="#a8acb8"/>
<use href="#brush" x="1400" y="922" width="17" height="17" fill="#c0c4d0"/>

<!-- chips -->
<rect class="chip" x="1247.500" y="965.500" width="62" height="22" rx="8"/><text x="1256" y="981" font-size="10.5" fill="#dde0e8" textLength="45">Reasoning</text>
<rect class="chipg" x="1316.500" y="965.500" width="44" height="22" rx="8"/><text x="1325" y="981" font-size="10.5" fill="#2a7a3a" textLength="27">Vision</text>
<rect class="chip" x="1367.500" y="965.500" width="43" height="22" rx="8"/><text x="1376" y="981" font-size="10.5" fill="#dde0e8" textLength="26">Audio</text>
<rect class="chip" x="1417.500" y="965.500" width="46" height="22" rx="8"/><text x="1426" y="981" font-size="10.5" fill="#dde0e8" textLength="28.500">Search</text>
<rect class="chip" x="1470.500" y="965.500" width="43" height="22" rx="8"/><text x="1479" y="981" font-size="10.5" fill="#dde0e8" textLength="26">Cache</text>
<rect class="chip" x="1520.500" y="965.500" width="47" height="22" rx="8"/><text x="1529" y="981" font-size="10.5" fill="#dde0e8" textLength="30">Stream</text>
<rect class="chipg" x="1575.500" y="965.500" width="39" height="22" rx="8"/><text x="1584" y="981" font-size="10.5" fill="#2a7a3a" textLength="22">Tools</text>

<!-- footer -->
<rect y="1054" width="1836" height="26" fill="#0d1326"/>
<rect y="1054" width="1836" height="1" fill="#8e949c"/>
<text x="10" y="1072.500" font-size="10.8" fill="#b4bac6" textLength="425">OpenRouter is a third-party service. BABY is not affiliated, sponsored or endorsed by OpenRouter.</text>
<rect x="1794.500" y="1038.500" width="33" height="33" rx="10" fill="#1a2438" stroke="#1e3a4a"/>
<use href="#cam" x="1802" y="1046" width="18" height="18" fill="#1cc4e4"/>
</svg>
</body></html>
